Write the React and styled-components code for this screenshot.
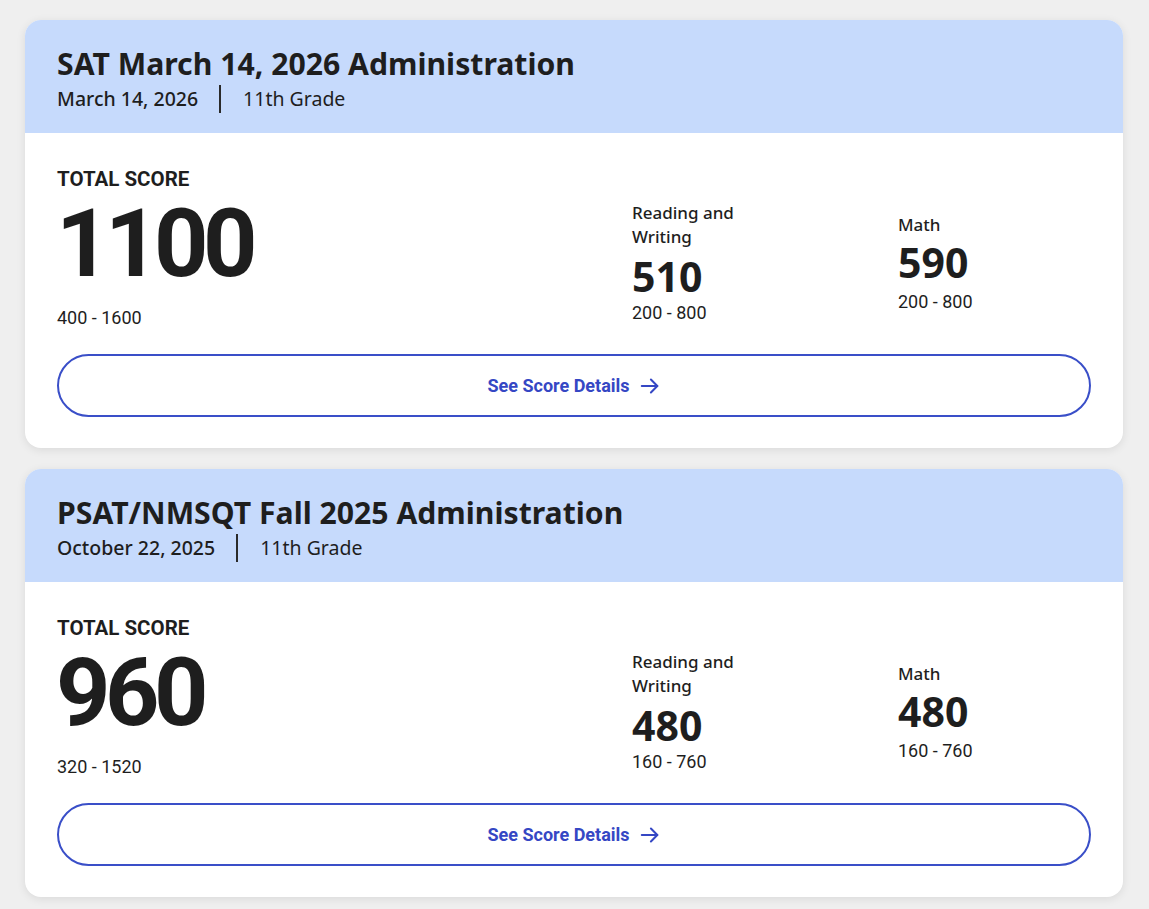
import React from "react";
import styled, { createGlobalStyle } from "styled-components";

const Global = createGlobalStyle`
  html, body { margin: 0; padding: 0; background: #efefef; }
  body { font-family: "Noto Sans", sans-serif; color: #1e1e1e; }
  * { box-sizing: border-box; }
`;

const Page = styled.div`
  display: flex;
  flex-direction: column;
  gap: 21px;
  padding: 20px 26px 10px 25px;
`;

const Card = styled.section`
  background: #fff;
  border-radius: 16px;
  overflow: hidden;
  box-shadow: 0 2px 10px rgba(0, 0, 0, 0.09);
`;

const Header = styled.header`
  background: #c6dafc;
  padding: 26px 32px 0 32px;
  height: 113px;
`;

const Title = styled.h2`
  margin: 0;
  font-family: "Noto Sans", sans-serif;
  font-weight: 700;
  font-size: 30.2px;
  line-height: 36px;
  color: #1e1e1e;
`;

const Meta = styled.div`
  display: flex;
  align-items: center;
  margin-top: 3px;
  font-size: 19.5px;
  line-height: 28px;
`;

const MetaDate = styled.span`
  font-weight: 500;
`;

const Divider = styled.span`
  width: 2px;
  height: 28px;
  background: #2a2a2a;
  margin: 0 22px 0 21px;
`;

const MetaGrade = styled.span`
  font-weight: 400;
`;

const Body = styled.div`
  padding: 35px 32px 31px 32px;
`;

const ScoreRow = styled.div`
  display: grid;
  grid-template-columns: 575px 266px 1fr;
  align-items: end;
`;

const TotalCol = styled.div`
  display: flex;
  flex-direction: column;
`;

const TotalLabel = styled.div`
  font-family: Roboto, sans-serif;
  font-weight: 700;
  font-size: 20.5px;
  line-height: 22px;
`;

const TotalValue = styled.div`
  font-family: Roboto, sans-serif;
  font-weight: 700;
  font-size: 95px;
  line-height: 100px;
  letter-spacing: -5.5px;
  margin-top: 4px;
  margin-left: -1px;
  color: #1e1e1e;
`;

const Range = styled.div`
  font-family: Roboto, sans-serif;
  font-size: 18px;
  line-height: 22px;
  margin-top: ${(p) => p.$gap || "0"};
`;

const SubCol = styled.div`
  display: flex;
  flex-direction: column;
`;

const SubLabel = styled.div`
  font-family: "Noto Sans", sans-serif;
  font-weight: 500;
  font-size: 17px;
  line-height: 24px;
  max-width: 140px;
`;

const SubValue = styled.div`
  font-family: "Noto Sans", sans-serif;
  font-weight: 700;
  font-size: 41px;
  line-height: 50px;
  margin-top: ${(p) => (p.$tight ? "0" : "2px")};
  margin-bottom: ${(p) => (p.$tight ? "4px" : "1px")};
`;

const SubBlock = styled.div`
  grid-column: 2 / 4;
  display: grid;
  grid-template-columns: 266px 1fr;
  align-items: center;
  margin-bottom: 5px;
`;

const DetailsButton = styled.button`
  margin-top: 25px;
  width: 100%;
  height: 63px;
  border: 2px solid #3a4fc8;
  border-radius: 999px;
  background: #fff;
  color: #3547c4;
  font-family: Roboto, sans-serif;
  font-weight: 700;
  font-size: 18px;
  display: flex;
  align-items: center;
  justify-content: center;
  gap: 9px;
  cursor: pointer;
`;

const Arrow = () => (
  <svg width="22" height="22" viewBox="0 0 24 24" fill="none" stroke="currentColor" strokeWidth="2.2" strokeLinecap="round" strokeLinejoin="round">
    <path d="M3 12h17" />
    <path d="M13 5l7 7-7 7" />
  </svg>
);

const tests = [
  {
    title: "SAT March 14, 2026 Administration",
    date: "March 14, 2026",
    grade: "11th Grade",
    total: "1100",
    totalRange: "400 - 1600",
    rw: "510",
    rwRange: "200 - 800",
    math: "590",
    mathRange: "200 - 800",
  },
  {
    title: "PSAT/NMSQT Fall 2025 Administration",
    date: "October 22, 2025",
    grade: "11th Grade",
    total: "960",
    totalRange: "320 - 1520",
    rw: "480",
    rwRange: "160 - 760",
    math: "480",
    mathRange: "160 - 760",
  },
];

function ScoreCard({ t }) {
  return (
    <Card>
      <Header>
        <Title>{t.title}</Title>
        <Meta>
          <MetaDate>{t.date}</MetaDate>
          <Divider />
          <MetaGrade>{t.grade}</MetaGrade>
        </Meta>
      </Header>
      <Body>
        <ScoreRow>
          <TotalCol>
            <TotalLabel>TOTAL SCORE</TotalLabel>
            <TotalValue>{t.total}</TotalValue>
            <Range $gap="13px">{t.totalRange}</Range>
          </TotalCol>
          <SubBlock>
            <SubCol>
              <SubLabel>Reading and Writing</SubLabel>
              <SubValue>{t.rw}</SubValue>
              <Range>{t.rwRange}</Range>
            </SubCol>
            <SubCol>
              <SubLabel>Math</SubLabel>
              <SubValue $tight>{t.math}</SubValue>
              <Range>{t.mathRange}</Range>
            </SubCol>
          </SubBlock>
        </ScoreRow>
        <DetailsButton>
          See Score Details
          <Arrow />
        </DetailsButton>
      </Body>
    </Card>
  );
}

export default function App() {
  return (
    <>
      <Global />
      <Page>
        {tests.map((t) => (
          <ScoreCard key={t.title} t={t} />
        ))}
      </Page>
    </>
  );
}
